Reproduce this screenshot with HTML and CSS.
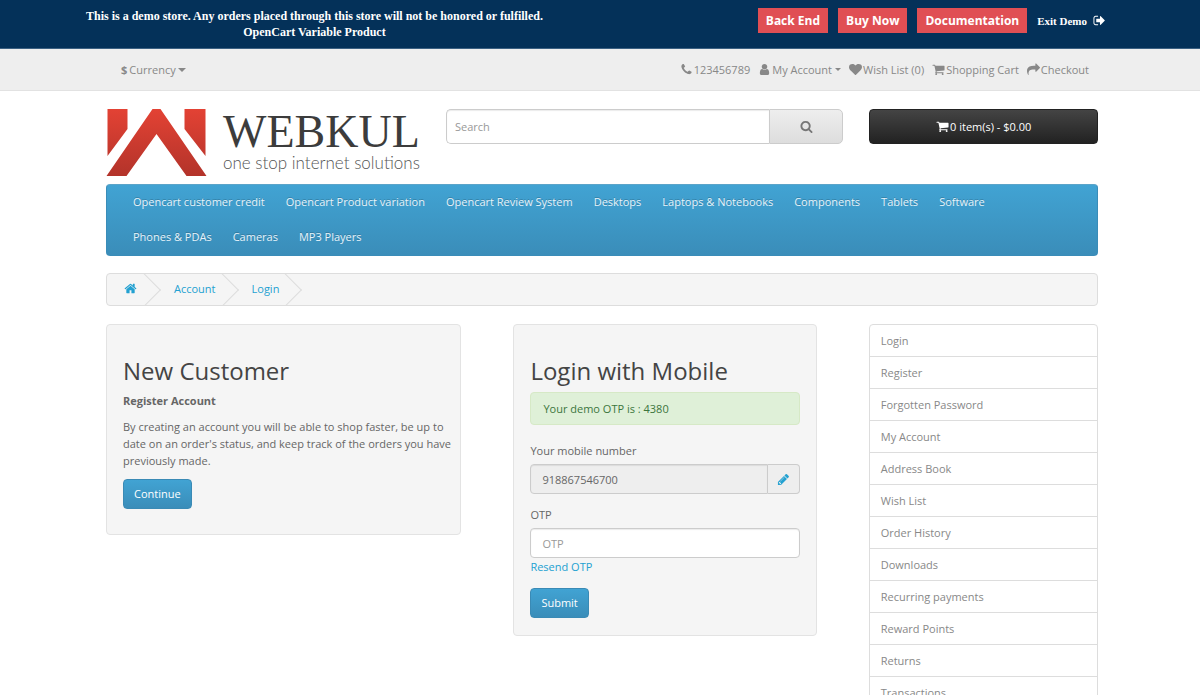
FILE: index.html
```html
<!DOCTYPE html>
<html lang="en">
<head>
    <meta charset="UTF-8">
    <meta name="viewport" content="width=device-width, initial-scale=1.0">
    <title>Account Login</title>
    <link rel="stylesheet" href="styles.css">
</head>
<body>
    <!-- Icon sprite -->
    <svg class="sprite" aria-hidden="true">
        <symbol id="phone" viewBox="0 0 1792 1792"><path d="M1600 1240q0 27-10 70.5t-21 68.5q-21 50-122 106-94 51-186 51-27 0-53-3.5t-57.5-12.5-47-14.5-55.5-20.5-49-18q-98-35-175-83-127-79-264-216t-216-264q-48-77-83-175-3-9-18-49t-20.5-55.5-14.5-47-12.5-57.5-3.5-53q0-92 51-186 56-101 106-122 25-11 68.5-21t70.5-10q14 0 21 3 18 6 53 76 11 19 30 54t35 63.5 31 53.5q3 4 17.5 25t21.5 35.5 7 28.5q0 20-28.5 50t-62 55-62 53-28.5 46q0 9 5 22.5t8.5 20.5 14 24 11.5 19q76 137 174 235t235 174q2 1 19 11.5t24 14 20.5 8.5 22.5 5q18 0 46-28.5t53-62 55-62 50-28.5q14 0 28.5 7t35.5 21.5 25 17.5q25 15 53.5 31t63.5 35 54 30q70 35 76 53 3 7 3 21z"/></symbol>
        <symbol id="user" viewBox="0 0 1792 1792"><path d="M1536 1399q0 109-62.5 187t-150.5 78h-854q-88 0-150.5-78t-62.5-187q0-85 8.5-160.5t31.5-152 58.5-131 94-89 134.5-34.5q131 128 313 128t313-128q76 0 134.5 34.5t94 89 58.5 131 31.5 152 8.5 160.5zm-256-887q0 159-112.5 271.5t-271.5 112.5-271.5-112.5-112.5-271.5 112.5-271.5 271.5-112.5 271.5 112.5 112.5 271.5z"/></symbol>
        <symbol id="heart" viewBox="0 0 1792 1792"><path d="M896 1664q-26 0-44-18l-624-602q-10-8-27.5-26t-55.5-65.5-68-97.5-53.5-121-23.5-138q0-220 127-344t351-124q62 0 126.5 21.5t120 58 95.5 68.5 76 68q36-36 76-68t95.5-68.5 120-58 126.5-21.5q224 0 351 124t127 344q0 221-229 450l-623 600q-18 18-44 18z"/></symbol>
        <symbol id="cart" viewBox="0 0 1792 1792"><path d="M704 1536q0 52-38 90t-90 38-90-38-38-90 38-90 90-38 90 38 38 90zm896 0q0 52-38 90t-90 38-90-38-38-90 38-90 90-38 90 38 38 90zm128-1088v512q0 24-16.5 42.5t-40.5 21.5l-1044 122q13 60 13 70 0 16-24 64h920q26 0 45 19t19 45-19 45-45 19h-1024q-26 0-45-19t-19-45q0-11 8-31.5t16-36 21.5-40 15.5-29.5l-177-823h-204q-26 0-45-19t-19-45 19-45 45-19h256q16 0 28.5 6.5t19.5 15.5 13 24.5 8 26 5.5 29.5 4.5 26h1201q26 0 45 19t19 45z"/></symbol>
        <symbol id="share" viewBox="0 0 1792 1792"><path d="M1792 640q0 26-19 45l-512 512q-19 19-45 19t-45-19-19-45v-256h-224q-98 0-175.5 6t-154 21.5-133 42.5-105.5 69.5-80 101-48.5 138.5-17.5 181q0 55 5 123 0 6 2.5 23.5t2.5 26.5q0 15-8.5 25t-23.5 10q-16 0-28-17-7-9-13-22t-13.5-30-10.5-24q-127-285-127-451 0-199 53-333 162-403 875-403h224v-256q0-26 19-45t45-19 45 19l512 512q19 19 19 45z"/></symbol>
        <symbol id="search" viewBox="0 0 1792 1792"><path d="M1216 832q0-185-131.5-316.5t-316.5-131.5-316.5 131.5-131.5 316.5 131.5 316.5 316.5 131.5 316.5-131.5 131.5-316.5zm512 832q0 52-38 90t-90 38q-54 0-90-38l-343-342q-179 124-399 124-143 0-273.5-55.5t-225-150-150-225-55.5-273.5 55.5-273.5 150-225 225-150 273.5-55.5 273.5 55.5 225 150 150 225 55.5 273.5q0 220-124 399l343 343q37 37 37 90z"/></symbol>
        <symbol id="home" viewBox="0 0 1792 1792"><path d="M1472 992v480q0 26-19 45t-45 19h-384v-384h-256v384h-384q-26 0-45-19t-19-45v-480q0-1 .5-3t.5-3l575-474 575 474q1 2 1 6zm223-69l-62 74q-8 9-21 11h-3q-13 0-21-7l-692-577-692 577q-12 8-24 7-13-2-21-11l-62-74q-8-10-7-23.5t11-21.5l719-599q32-26 76-26t76 26l244 204v-195q0-14 9-23t23-9h192q14 0 23 9t9 23v408l219 182q10 8 11 21.5t-7 23.5z"/></symbol>
        <symbol id="pencil" viewBox="0 0 1792 1792"><path d="M491 1536l91-91-235-235-91 91v107h128v128h107zm523-928q0-22-22-22-10 0-17 7l-542 542q-7 7-7 17 0 22 22 22 10 0 17-7l542-542q7-7 7-17zm-54-192l416 416-832 832h-416v-416zm683 96q0 53-37 90l-166 166-416-416 166-165q36-38 90-38 53 0 91 38l235 234q37 39 37 91z"/></symbol>
        <symbol id="sign-out" viewBox="0 0 1792 1792"><path d="M704 1440q0 4 1 20t.5 26.5-3 23.5-10 19.5-20.5 6.5h-320q-119 0-203.5-84.5t-84.5-203.5v-704q0-119 84.5-203.5t203.5-84.5h320q13 0 22.5 9.5t9.5 22.5q0 4 1 20t.5 26.5-3 23.5-10 19.5-20.5 6.5h-320q-66 0-113 47t-47 113v704q0 66 47 113t113 47h312l11.5 1 11.5 3 8 5.5 7 9 2 13.5zm928-544q0 26-19 45l-544 544q-19 19-45 19t-45-19-19-45v-288h-448q-26 0-45-19t-19-45v-384q0-26 19-45t45-19h448v-288q0-26 19-45t45-19 45 19l544 544q19 19 19 45z"/></symbol>
    </svg>

    <div class="demo-bar">
        <p class="demo-text">This is a demo store. Any orders placed through this store will not be honored or fulfilled.<br>OpenCart Variable Product</p>
        <div class="demo-links">
            <a class="demo-btn" href="#">Back End</a>
            <a class="demo-btn" href="#">Buy Now</a>
            <a class="demo-btn" href="#">Documentation</a>
            <a class="demo-exit" href="#">Exit Demo <svg class="icon"><use href="#sign-out"/></svg></a>
        </div>
    </div>

    <nav class="top">
        <button class="currency" type="button"><strong>$</strong> Currency<span class="caret"></span></button>
        <ul class="top-links">
            <li><a href="#"><svg class="icon"><use href="#phone"/></svg>123456789</a></li>
            <li><a href="#"><svg class="icon"><use href="#user"/></svg>My Account <span class="caret small"></span></a></li>
            <li><a href="#"><svg class="icon"><use href="#heart"/></svg>Wish List (0)</a></li>
            <li><a href="#"><svg class="icon"><use href="#cart"/></svg>Shopping Cart</a></li>
            <li><a href="#"><svg class="icon"><use href="#share"/></svg>Checkout</a></li>
        </ul>
    </nav>

    <div class="container">
        <header class="header">
            <a class="logo" href="#">
                <svg class="logo-mark" viewBox="0 0 100 68" aria-hidden="true">
                    <defs>
                        <linearGradient id="red" gradientUnits="userSpaceOnUse" x1="0" y1="0" x2="0" y2="68">
                            <stop offset="0" stop-color="#e34234"/>
                            <stop offset="1" stop-color="#b2332a"/>
                        </linearGradient>
                    </defs>
                    <path fill="url(#red)" d="M1 0H21V20L1 47ZM78 0H99V47L78 20ZM46 0H54L100 67H80L50 25L20 67H0Z"/>
                </svg>
                <span class="logo-text">
                    <span class="logo-name">WEBKUL</span>
                    <span class="logo-tag">one stop internet solutions</span>
                </span>
            </a>
            <form class="search">
                <input type="text" placeholder="Search" aria-label="Search">
                <button type="button" aria-label="Search"><svg class="icon"><use href="#search"/></svg></button>
            </form>
            <button class="cart-btn" type="button"><svg class="icon"><use href="#cart"/></svg>0 item(s) - $0.00</button>
        </header>

        <nav class="menu">
            <a href="#">Opencart customer credit</a>
            <a href="#">Opencart Product variation</a>
            <a href="#">Opencart Review System</a>
            <a href="#">Desktops</a>
            <a href="#">Laptops &amp; Notebooks</a>
            <a href="#">Components</a>
            <a href="#">Tablets</a>
            <a href="#">Software</a>
            <a href="#">Phones &amp; PDAs</a>
            <a href="#">Cameras</a>
            <a href="#">MP3 Players</a>
        </nav>

        <ul class="breadcrumb">
            <li><a href="#" aria-label="Home"><svg class="icon"><use href="#home"/></svg></a></li>
            <li><a href="#">Account</a></li>
            <li><a href="#">Login</a></li>
        </ul>

        <div class="content">
            <section class="well">
                <h2>New Customer</h2>
                <p><strong>Register Account</strong></p>
                <p>By creating an account you will be able to shop faster, be up to date on an order's status, and keep track of the orders you have previously made.</p>
                <a class="btn" href="#">Continue</a>
            </section>

            <form class="well">
                <h2>Login with Mobile</h2>
                <div class="alert">Your demo OTP is : 4380</div>
                <div class="form-group">
                    <label for="mobile">Your mobile number</label>
                    <div class="input-group">
                        <input type="text" id="mobile" value="918867546700" readonly>
                        <button type="button" aria-label="Edit number"><svg class="icon"><use href="#pencil"/></svg></button>
                    </div>
                </div>
                <div class="form-group">
                    <label for="otp">OTP</label>
                    <input type="text" id="otp" placeholder="OTP">
                    <a class="resend" href="#">Resend OTP</a>
                </div>
                <button class="btn" type="button">Submit</button>
            </form>

            <aside class="list-group">
                <a href="#">Login</a>
                <a href="#">Register</a>
                <a href="#">Forgotten Password</a>
                <a href="#">My Account</a>
                <a href="#">Address Book</a>
                <a href="#">Wish List</a>
                <a href="#">Order History</a>
                <a href="#">Downloads</a>
                <a href="#">Recurring payments</a>
                <a href="#">Reward Points</a>
                <a href="#">Returns</a>
                <a href="#">Transactions</a>
            </aside>
        </div>
    </div>
</body>
</html>
```

FILE: styles.css
```css
* {
    box-sizing: border-box;
}
body {
    margin: 0;
    background: #fff;
    color: #666;
    font-family: "Open Sans", sans-serif;
    font-size: 11px;
    line-height: 17px;
}
a {
    color: #23a1d1;
    text-decoration: none;
}
ul {
    list-style: none;
    margin: 0;
    padding: 0;
}
button,
input {
    font: inherit;
    color: inherit;
}
button {
    cursor: pointer;
}
.sprite {
    display: none;
}
.icon {
    width: 13px;
    height: 13px;
    fill: currentColor;
    flex: none;
}

/* Demo bar */
.demo-bar {
    display: flex;
    align-items: flex-start;
    justify-content: space-between;
    min-height: 49px;
    padding: 8px 94px 0 86px;
    background: #043159;
    border-bottom: 1px solid #3c6183;
    color: #fff;
}
.demo-text {
    margin: 0;
    font: bold 12px/16px "Liberation Serif", serif;
    text-align: center;
}
.demo-links {
    display: flex;
    align-items: center;
    gap: 10px;
}
.demo-btn {
    padding: 0 8px;
    background: #e04f54;
    color: #fff;
    font-size: 12px;
    font-weight: bold;
    line-height: 25px;
}
.demo-exit {
    display: flex;
    align-items: center;
    gap: 6px;
    color: #fff;
    font: bold 11px/16px "Liberation Serif", serif;
}

/* Top links */
.top {
    display: flex;
    align-items: center;
    justify-content: space-between;
    height: 42px;
    padding: 0 111px 0 121px;
    background: #eee;
    border-bottom: 1px solid #e2e2e2;
    color: #888;
}
.top a {
    color: #888;
}
.currency {
    display: flex;
    align-items: center;
    gap: 2px;
    padding: 0;
    border: 0;
    background: none;
}
.caret {
    border-top: 4px solid;
    border-left: 4px solid transparent;
    border-right: 4px solid transparent;
}
.caret.small {
    margin-left: 2px;
    border-width: 3px 3px 0;
}
.top-links {
    display: flex;
    gap: 8px;
}
.top-links a {
    display: flex;
    align-items: center;
    gap: 1px;
}

/* Header */
.container {
    padding: 18px 102px 0 106px;
}
.header {
    display: grid;
    grid-template-columns: 313fr 398fr 229fr;
    gap: 26px;
    align-items: start;
}
.logo {
    display: flex;
    gap: 16px;
    height: 75px;
}
.logo-mark {
    width: 101px;
    height: 68px;
    flex: none;
}
.logo-text {
    display: flex;
    flex-direction: column;
}
.logo-name {
    color: #3c3c3c;
    font: 46px/46px "Liberation Serif", serif;
}
.logo-tag {
    color: #555;
    font: 300 17px/16px Lato, sans-serif;
    white-space: nowrap;
}
.search {
    display: flex;
    height: 35px;
}
.search input {
    flex: 1;
    min-width: 0;
    padding: 0 8px;
    border: 1px solid #ccc;
    border-right: 0;
    border-radius: 5px 0 0 5px;
    box-shadow: inset 0 1px 1px rgba(0, 0, 0, 0.08);
}
input::placeholder {
    color: #999;
}
.search button {
    display: flex;
    align-items: center;
    justify-content: center;
    width: 74px;
    border: 1px solid #ccc;
    border-radius: 0 5px 5px 0;
    background: linear-gradient(#eee, #ddd);
    color: #777;
}
.cart-btn {
    display: flex;
    align-items: center;
    justify-content: center;
    gap: 1px;
    height: 35px;
    border: 1px solid #222;
    border-radius: 4px;
    background: linear-gradient(#444, #222);
    color: #fff;
}

/* Main menu */
.menu {
    display: flex;
    flex-wrap: wrap;
    column-gap: 1px;
    min-height: 72px;
    padding: 0 90px 0 16px;
    border: 1px solid #3a8cb8;
    border-top-color: #5ba4c9;
    border-radius: 4px;
    background: linear-gradient(#41a3d3, #3a8db9);
}
.menu a {
    padding: 8px 10px 10px;
    color: #e6f3fa;
    text-shadow: 0 -1px 0 rgba(0, 0, 0, 0.2);
}

/* Breadcrumb */
.breadcrumb {
    display: flex;
    height: 33px;
    margin: 17px 0 18px;
    border: 1px solid #ddd;
    border-radius: 4px;
    background: #f5f5f5;
    overflow: hidden;
}
.breadcrumb li {
    position: relative;
    padding: 6px 18px;
}
.breadcrumb li:first-child {
    padding: 8px 19px 8px 17px;
}
.breadcrumb li::after {
    content: "";
    position: absolute;
    top: 4px;
    right: 0;
    width: 23px;
    height: 23px;
    border-top: 1px solid #ddd;
    border-right: 1px solid #ddd;
    transform: rotate(45deg);
}

/* Page columns */
.content {
    display: grid;
    grid-template-columns: 355fr 303fr 229fr;
    gap: 52px;
    align-items: start;
}
.well {
    padding: 31px 16px 17px;
    border: 1px solid #e3e3e3;
    border-radius: 4px;
    background: #f5f5f5;
}
section.well {
    padding-right: 4px;
    padding-bottom: 25px;
}
h2 {
    margin: 0 0 6px;
    color: #444;
    font-size: 24px;
    font-weight: normal;
    line-height: 30px;
}
p {
    margin: 0 0 9px;
}
.btn {
    display: inline-block;
    height: 30px;
    margin-top: 1px;
    padding: 0 10px;
    border: 1px solid #3a8ab5;
    border-radius: 4px;
    background: linear-gradient(#41a3d3, #3a8db9);
    color: #fff;
    line-height: 28px;
}
.alert {
    margin-bottom: 17px;
    padding: 7px 12px;
    border: 1px solid #d6e9c6;
    border-radius: 4px;
    background: #dff0d8;
    color: #3c763d;
}
.form-group {
    margin-bottom: 12px;
}
label {
    display: block;
    margin-bottom: 5px;
}
.form-group input {
    display: block;
    width: 100%;
    height: 30px;
    padding: 0 11px;
    border: 1px solid #ccc;
    border-radius: 4px;
    background: #fff;
    box-shadow: inset 0 1px 1px rgba(0, 0, 0, 0.08);
}
.input-group {
    display: flex;
}
.form-group .input-group input {
    flex: 1;
    min-width: 0;
    border-radius: 4px 0 0 4px;
    background: #eee;
}
.input-group button {
    display: flex;
    align-items: center;
    justify-content: center;
    width: 32px;
    border: 1px solid #ccc;
    border-left: 0;
    border-radius: 0 4px 4px 0;
    background: #eee;
    color: #23a1d1;
}

/* Account links */
.list-group {
    border: 1px solid #ddd;
    border-radius: 4px;
}
.list-group a {
    display: block;
    padding: 7px 11px;
    border-bottom: 1px solid #ddd;
    color: #888;
}
.list-group a:last-child {
    border-bottom: 0;
}
```
